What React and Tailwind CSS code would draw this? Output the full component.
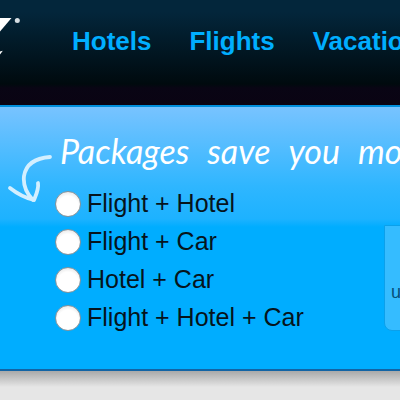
const navLinks = ["Hotels", "Flights", "Vacations"];

const packages = [
  { id: "flight-hotel", label: "Flight + Hotel" },
  { id: "flight-car", label: "Flight + Car" },
  { id: "hotel-car", label: "Hotel + Car" },
  { id: "flight-hotel-car", label: "Flight + Hotel + Car" },
];

const Logo = () => (
  <svg viewBox="0 0 24 48" className="h-12 w-6 shrink-0" fill="#ffffff" aria-hidden="true">
    <path d="M0 6H11.500L0 19.500Z" />
    <path d="M0 39.500L2.800 38.800L0 42.500Z" />
    <circle cx="17.300" cy="8.500" r="2.500" fill="#d5dde2" />
  </svg>
);

const Arrow = () => (
  <svg
    viewBox="0 0 52 52"
    className="size-13 shrink-0"
    fill="none"
    stroke="#d3efff"
    strokeWidth="3.800"
    strokeLinecap="round"
    strokeLinejoin="round"
    aria-hidden="true"
  >
    <path d="M50 2C36 3 26 9 24 21C23 30 26 38 33 45" />
    <path d="M10 33C15 37 22 42 34 45C36 40 39 34 38 28" />
  </svg>
);

const Header = () => (
  <header className="bg-[linear-gradient(#03263b_0px,#03263b_12px,#000a0e_84px,#090514_88px,#0a0413_100%)]">
    <div className="flex items-start pt-3 pb-[45px]">
      <Logo />
      <nav className="flex gap-[38px] pl-12 pt-3">
        {navLinks.map((link) => (
          <a key={link} href="#" className="text-[26px] leading-[34px] font-bold text-[#00aeff]">
            {link}
          </a>
        ))}
      </nav>
    </div>
  </header>
);

const PackagePicker = () => (
  <form className="flex flex-col">
    {packages.map((item) => (
      <label key={item.id} htmlFor={item.id} className="flex h-[38px] items-center gap-1.5 text-[25px] whitespace-nowrap text-[#06141c]">
        <input
          id={item.id}
          type="radio"
          name="package"
          className="size-[26px] shrink-0 appearance-none rounded-full border border-[#8b9399] bg-[radial-gradient(circle_at_50%_60%,#ffffff_55%,#d5d5d5_100%)] checked:border-8"
        />
        {item.label}
      </label>
    ))}
  </form>
);

export default function App() {
  return (
    <div className="min-h-screen overflow-hidden bg-[#e6e6e6] font-['Liberation_Sans',Arial,sans-serif]">
      <Header />
      <main className="border-t-2 border-b-2 border-t-[#008fdc] border-b-[#1264a5] bg-[linear-gradient(#78c3ff_0px,#2eb6ff_80px,#1db2ff_112px,#00adff_120px)]">
        <div className="flex items-start pt-6 pb-8">
          <div className="w-13 shrink-0 pt-6">
            <Arrow />
          </div>
          <div className="min-w-0 grow">
            <h2 className="flex gap-[18px] pl-2 font-['Lato',sans-serif] text-[34px] leading-10 italic whitespace-nowrap text-white">
              <span>Packages</span> <span>save</span> <span>you</span> <span>moolah</span>
            </h2>
            <div className="flex items-start justify-between pt-3.5 pl-[3px]">
              <PackagePicker />
              <aside className="mt-10 -mr-1 flex h-[106px] w-5 shrink-0 items-end overflow-hidden rounded-bl-lg border border-[#0ba0ea] bg-[#35bcff] pb-6 pl-1.5 text-lg text-[#075078]">
                up
              </aside>
            </div>
          </div>
        </div>
      </main>
      <div className="h-4 bg-linear-to-b from-[#a9a9a9] to-[#e6e6e6]" />
    </div>
  );
}
